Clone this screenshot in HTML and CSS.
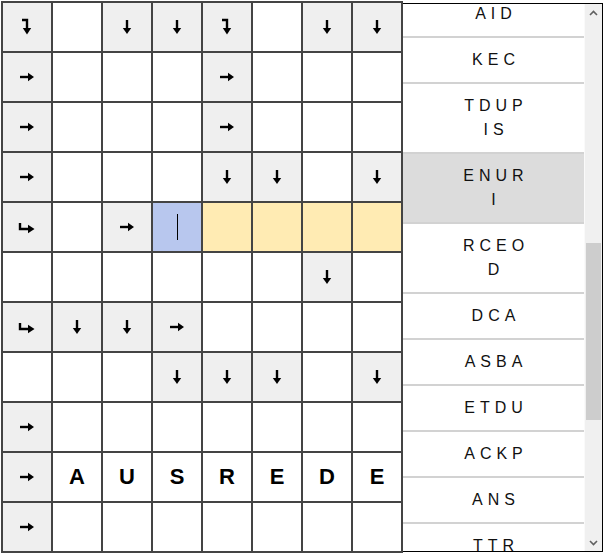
FILE: index.html
```html
<!DOCTYPE html>
<html lang="de">
<head>
    <meta charset="UTF-8">
    <meta name="viewport" content="width=device-width, initial-scale=1.0">
    <title>Schwedenrätsel</title>
    <link rel="stylesheet" href="styles.css">
</head>
<body>
    <div class="app">
        <div class="board" id="board"></div>
        <div class="clues">
            <div class="clue-list">
                <ul class="clue-items" id="clueItems"></ul>
            </div>
            <div class="scrollbar">
                <div class="sb-btn">
                    <svg width="9" height="6" viewBox="0 0 9 6"><polyline points="1,5 4.5,1.5 8,5" fill="none" stroke="#606060" stroke-width="1.6"/></svg>
                </div>
                <div class="sb-track"><div class="sb-thumb"></div></div>
                <div class="sb-btn">
                    <svg width="9" height="6" viewBox="0 0 9 6"><polyline points="1,1 4.5,4.5 8,1" fill="none" stroke="#606060" stroke-width="1.6"/></svg>
                </div>
            </div>
        </div>
    </div>
    <script>
        // Grid layout: . empty, d down, r right, b right-then-down, h down-then-right,
        // a active cell, y current word, capitals are filled letters
        const rows = [
            'b.ddb.dd',
            'r...r...',
            'r...r...',
            'r...dd.d',
            'h.rayyyy',
            '......d.',
            'hddr....',
            '...ddd.d',
            'r.......',
            'rAUSREDE',
            'r.......'
        ];

        const icons = {
            d: '<svg width="16" height="16" viewBox="0 0 16 16"><path d="M8 1v9" stroke="#000" stroke-width="2.4"/><path d="M3.8 9h8.4L8 15z"/></svg>',
            r: '<svg width="16" height="16" viewBox="0 0 16 16"><path d="M1 8h9" stroke="#000" stroke-width="2.4"/><path d="M9 3.8v8.4L15 8z"/></svg>',
            b: '<svg width="16" height="18" viewBox="0 0 16 18"><path d="M3 2h5v9" fill="none" stroke="#000" stroke-width="2.4"/><path d="M3.8 10h8.4L8 16.5z"/></svg>',
            h: '<svg width="18" height="16" viewBox="0 0 18 16"><path d="M2 4v6h9" fill="none" stroke="#000" stroke-width="2.4"/><path d="M10 5.8v8.4L16.5 10z"/></svg>'
        };

        const board = document.getElementById('board');
        rows.forEach(row => {
            for (const ch of row) {
                const cell = document.createElement('div');
                cell.className = 'cell';
                if (icons[ch]) {
                    cell.classList.add('clue');
                    cell.innerHTML = icons[ch];
                } else if (ch === 'a') {
                    cell.classList.add('active');
                    cell.innerHTML = '<span class="caret"></span>';
                } else if (ch === 'y') {
                    cell.classList.add('word');
                } else if (ch !== '.') {
                    cell.innerHTML = `<span class="letter">${ch}</span>`;
                }
                board.appendChild(cell);
            }
        });

        // Scrambled answers
        const clues = ['AID', 'KEC', 'TDUPIS', 'ENURI', 'RCEOD', 'DCA', 'ASBA', 'ETDU', 'ACKP', 'ANS', 'TTR', 'LEMA'];
        const clueItems = document.getElementById('clueItems');
        clues.forEach((word, i) => {
            const li = document.createElement('li');
            li.className = 'clue-item' + (i === 3 ? ' selected' : '');
            li.innerHTML = `<div class="txt">${word}</div>`;
            clueItems.appendChild(li);
        });
    </script>
</body>
</html>
```

FILE: styles.css
```css
body {
    margin: 0;
    padding: 0;
    background: #fff;
    font-family: "Liberation Sans", Arial, sans-serif;
}

.app {
    display: flex;
    align-items: flex-start;
    padding: 1px;
}

.board {
    display: grid;
    grid-template-columns: repeat(8, 48px);
    grid-auto-rows: 48px;
    gap: 2px;
    padding: 2px;
    background: #444;
}

.cell {
    background: #fff;
    display: flex;
    align-items: center;
    justify-content: center;
}

.cell.clue {
    background: #efefef;
}

.cell.active {
    background: #b8c7ee;
}

.cell.word {
    background: #ffebb3;
}

.letter {
    font-weight: bold;
    font-size: 22px;
    color: #000;
}

.caret {
    width: 1px;
    height: 26px;
    background: #000;
}

.clues {
    display: flex;
    box-sizing: border-box;
    width: 200px;
    height: 549px;
    margin-top: 2px;
    border: 1px solid #000;
    border-left: none;
}

.clue-list {
    flex: 1;
    overflow: hidden;
}

.clue-items {
    list-style: none;
    margin: -12px 0 0 0;
    padding: 0;
}

.clue-item {
    padding: 10px 0;
    border-bottom: 2px solid #d2d2d2;
    font-size: 16px;
    line-height: 24px;
    letter-spacing: 5px;
    text-align: center;
    color: #111;
}

.clue-item.selected {
    background: #dcdcdc;
}

.clue-item .txt {
    width: 68px;
    margin: 0 auto;
    padding-left: 5px;
    word-break: break-all;
}

.scrollbar {
    width: 17px;
    display: flex;
    flex-direction: column;
    background: #f0f0f0;
    border-left: 1px solid #fafafa;
}

.sb-btn {
    height: 17px;
    display: flex;
    align-items: center;
    justify-content: center;
}

.sb-track {
    flex: 1;
    padding: 0 1px;
}

.sb-thumb {
    margin-top: 222px;
    height: 177px;
    background: #cdcdcd;
}
```
